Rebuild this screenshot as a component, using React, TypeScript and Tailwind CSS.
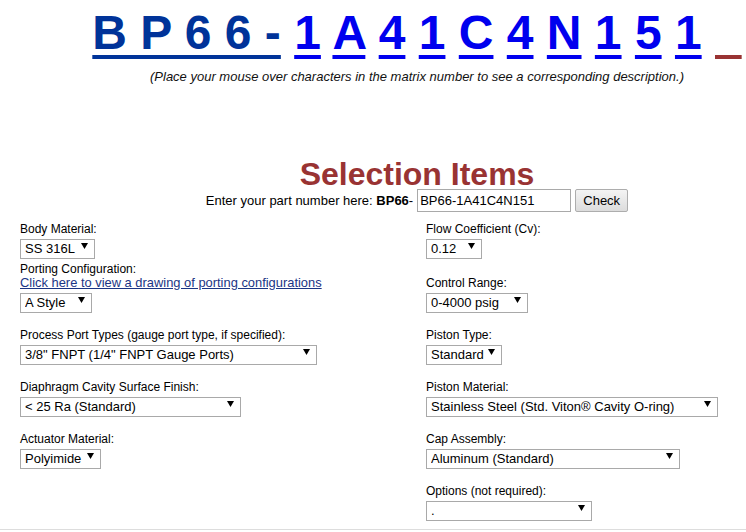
import React from 'react';

const font = { fontFamily: '"Liberation Sans", Arial, sans-serif' };

function Arrow() {
  return (
    <svg width="7" height="6" viewBox="0 0 7 6" className="pointer-events-none absolute right-[7px] top-[7px]">
      <path d="M0 0 H7 L3.5 6 Z" fill="#000" />
    </svg>
  );
}

function Sel({ value, className }: { value: string; className: string }) {
  return (
    <div className={`relative h-5 ${className}`}>
      <select
        defaultValue={value}
        className="h-5 w-full appearance-none rounded-none border border-[#a9a9a9] bg-white pl-[4px] text-[13px] leading-[18px] text-black outline-none"
      >
        <option value={value}>{value}</option>
      </select>
      <Arrow />
    </div>
  );
}

function Field({ label, value, className, extra }: { label: string; value: string; className: string; extra?: React.ReactNode }) {
  return (
    <div className="flex flex-col items-start">
      <span className="h-[14px] text-[12px] leading-[14px] text-black">{label}</span>
      {extra}
      <Sel value={value} className={className} />
    </div>
  );
}

const chars = ['1', 'A', '4', '1', 'C', '4', 'N', '1', '5', '1'];

export default function App() {
  return (
    <div className="h-[532px] w-[746px] overflow-hidden bg-white" style={font}>
      {/* matrix number */}
      <div className="pl-[88px] pt-[5px] text-center">
        <div className="whitespace-pre text-[48px] font-bold leading-[55px]">
          <a href="#" className="text-[#003399] underline decoration-[4px] underline-offset-[6px]">B P 6 6 -</a>
          {' '}
          {chars.map((c, i) => (
            <React.Fragment key={i}>
              <a href="#" className="text-[#0000ee] underline decoration-[4px] underline-offset-[6px]">{c}</a>
              {' '}
            </React.Fragment>
          ))}
          <span className="text-[#993333] underline decoration-[4px] underline-offset-[6px]">{'\u00a0\u00a0'}</span>
        </div>
        <p className="mt-[9px] text-[13px] italic leading-[15px] text-[#111]">
          (Place your mouse over characters in the matrix number to see a corresponding description.)
        </p>
      </div>

      {/* selection title + part number input */}
      <div className="mt-[72px] pl-[88px] text-center">
        <h2 className="text-[32px] font-bold leading-[37px] text-[#993333]">Selection Items</h2>
        <div className="-mt-[4px] flex items-center justify-center gap-[4px] text-[13px] text-black">
          <span>
            Enter your part number here: <b>BP66</b>-
          </span>
          <input
            defaultValue="BP66-1A41C4N151"
            className="h-[23px] w-[154px] border border-[#a9a9a9] px-[2px] text-[13px] outline-none"
          />
          <button className="h-[23px] w-[53px] rounded-[2px] border border-[#adadad] bg-gradient-to-b from-[#f4f4f4] to-[#dcdcdc] text-[13px]">
            Check
          </button>
        </div>
      </div>

      {/* options table */}
      <div className="mt-[10px] flex pl-5">
        <div className="flex w-[406px] flex-col">
          <Field label="Body Material:" value="SS 316L" className="w-[75px]" />
          <div className="mt-[6px]">
            <Field
              label="Porting Configuration:"
              value="A Style"
              className="w-[72px]"
              extra={
                <a href="#" className="h-[14px] text-[12.9px] leading-[14px] text-[#1b3585] underline">
                  Click here to view a drawing of porting configurations
                </a>
              }
            />
          </div>
          <div className="mt-[18px] flex flex-col gap-[18px]">
            <Field label="Process Port Types (gauge port type, if specified):" value={'3/8" FNPT (1/4" FNPT Gauge Ports)'} className="w-[297px]" />
            <Field label="Diaphragm Cavity Surface Finish:" value="< 25 Ra (Standard)" className="w-[221px]" />
            <Field label="Actuator Material:" value="Polyimide" className="w-[81px]" />
          </div>
        </div>
        <div className="flex flex-col">
          <Field label="Flow Coefficient (Cv):" value="0.12" className="w-[56px]" />
          <div className="mt-[20px] flex flex-col gap-[18px]">
            <Field label="Control Range:" value="0-4000 psig" className="w-[102px]" />
            <Field label="Piston Type:" value="Standard" className="w-[76px]" />
            <Field label="Piston Material:" value="Stainless Steel (Std. Viton® Cavity O-ring)" className="w-[292px]" />
            <Field label="Cap Assembly:" value="Aluminum (Standard)" className="w-[254px]" />
            <Field label="Options (not required):" value="." className="w-[166px]" />
          </div>
        </div>
      </div>
      <hr className="mt-[11px] border-t border-[#dddddd]" />
    </div>
  );
}
